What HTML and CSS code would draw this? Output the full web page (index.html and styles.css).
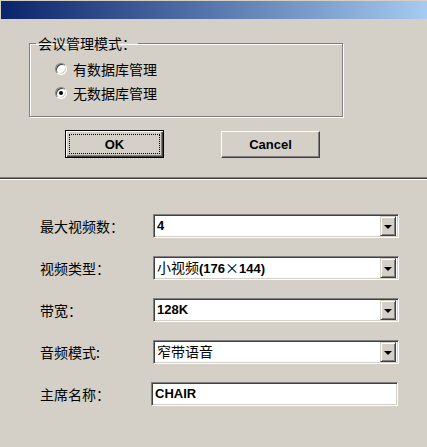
FILE: index.html
```html
<!DOCTYPE html>
<html>
<head>
<meta charset="utf-8">
<link rel="stylesheet" href="styles.css">
</head>
<body>
<div class="titlebar"></div>
<fieldset class="group">
  <legend class="legend">会议管理模式：</legend>
  <div class="radios">
    <div class="radio-row"><span class="radio"></span><span class="radio-label">有数据库管理</span></div>
    <div class="radio-row"><span class="radio checked"></span><span class="radio-label">无数据库管理</span></div>
  </div>
</fieldset>
<div class="buttons">
  <div class="btn default"><span class="focus">OK</span></div>
  <div class="btn cancel">Cancel</div>
</div>
<div class="separator"></div>
<div class="form">
  <div class="row">
    <span class="label">最大视频数：</span>
    <div class="combo"><span class="value">4</span><span class="arrow"><span class="tri"></span></span></div>
  </div>
  <div class="row">
    <span class="label">视频类型：</span>
    <div class="combo"><span class="value"><span class="cjk">小视频</span>(176<span class="cjk">×</span>144)</span><span class="arrow"><span class="tri"></span></span></div>
  </div>
  <div class="row">
    <span class="label">带宽：</span>
    <div class="combo"><span class="value">128K</span><span class="arrow"><span class="tri"></span></span></div>
  </div>
  <div class="row">
    <span class="label">音频模式:</span>
    <div class="combo"><span class="value"><span class="cjk">窄带语音</span></span><span class="arrow"><span class="tri"></span></span></div>
  </div>
  <div class="row">
    <span class="label">主席名称：</span>
    <div class="textbox"><span class="value">CHAIR</span></div>
  </div>
</div>
</body>
</html>
```
FILE: styles.css
```css
html, body {
  margin: 0;
  padding: 0;
}
body {
  width: 427px;
  height: 447px;
  overflow: hidden;
  background: #d4d0c8;
  font-family: "Noto Sans CJK SC", "Liberation Sans", sans-serif;
  font-size: 14px;
  color: #000;
}
.titlebar {
  margin: 1px 0 0 1px;
  height: 18px;
  background: linear-gradient(to right, #0a246a, #a6caf0);
}
.group {
  box-sizing: border-box;
  width: 314px;
  margin: 16px 0 0 29px;
  padding: 0 6px 11px 6px;
  border: 1px solid #808080;
  box-shadow: inset 1px 1px #fff, 1px 1px #fff;
  min-width: 0;
}
.legend {
  padding: 0 2px;
  font-size: 14px;
  line-height: 16px;
}
.radios {
  margin: 6px 0 0 19px;
}
.radio-row {
  display: flex;
  align-items: center;
  height: 24px;
  gap: 6px;
}
.radio {
  box-sizing: border-box;
  width: 12px;
  height: 12px;
  border-radius: 50%;
  background: #fff;
  border: 1px solid;
  border-color: #808080 #fff #fff #808080;
  box-shadow: inset 1px 1px #404040, inset -1px -1px #d4d0c8;
  display: flex;
  align-items: center;
  justify-content: center;
}
.radio.checked::after {
  content: "";
  width: 4px;
  height: 4px;
  border-radius: 50%;
  background: #000;
}
.radio-label {
  line-height: 16px;
}
.buttons {
  display: flex;
  align-items: flex-start;
  gap: 57px;
  margin-top: 13px;
  padding-left: 65px;
}
.btn {
  box-sizing: border-box;
  width: 99px;
  display: flex;
  align-items: center;
  justify-content: center;
  font-family: "Liberation Sans", sans-serif;
  font-weight: bold;
  font-size: 13px;
}
.btn.default {
  height: 28px;
  border: 1px solid #000;
  box-shadow: inset 1px 1px #fff, inset -1px -1px #404040, inset -2px -2px #808080;
  padding: 3px;
}
.btn.default .focus {
  box-sizing: border-box;
  width: 100%;
  height: 100%;
  border: 1px dotted #000;
  display: flex;
  align-items: center;
  justify-content: center;
}
.btn.cancel {
  height: 27px;
  margin-top: 1px;
  border: 1px solid;
  border-color: #fff #404040 #404040 #fff;
  box-shadow: inset -1px -1px #808080;
}
.separator {
  margin-top: 19px;
  height: 3px;
  background: linear-gradient(to bottom, #808080 0 1px, #404040 1px 2px, #fff 2px 3px);
}
.form {
  padding-top: 34px;
  display: flex;
  flex-direction: column;
  gap: 18px;
}
.row {
  display: flex;
  align-items: center;
  height: 24px;
}
.label {
  box-sizing: border-box;
  width: 153px;
  padding-left: 40px;
  line-height: 16px;
}
.combo, .textbox {
  box-sizing: border-box;
  height: 24px;
  background: #fff;
  border: 1px solid;
  border-color: #808080 #fff #fff #808080;
  box-shadow: inset 1px 1px #404040, inset -1px -1px #d4d0c8;
  display: flex;
  align-items: center;
  padding: 2px 2px 2px 3px;
}
.combo {
  width: 246px;
}
.textbox {
  width: 247px;
  margin-left: -2px;
}
.value {
  flex: 1;
  font-family: "Liberation Sans", "Noto Sans CJK SC", sans-serif;
  font-weight: bold;
  font-size: 13px;
  line-height: 16px;
  white-space: nowrap;
}
.cjk {
  font-family: "Noto Sans CJK SC", sans-serif;
  font-weight: normal;
  font-size: 14px;
}
.arrow {
  box-sizing: border-box;
  width: 16px;
  height: 20px;
  background: #d4d0c8;
  border: 1px solid;
  border-color: #d4d0c8 #404040 #404040 #d4d0c8;
  box-shadow: inset 1px 1px #fff, inset -1px -1px #808080;
  display: flex;
  align-items: center;
  justify-content: center;
}
.tri {
  width: 0;
  height: 0;
  border-left: 4px solid transparent;
  border-right: 4px solid transparent;
  border-top: 4px solid #000;
  margin-top: 1px;
}
```
